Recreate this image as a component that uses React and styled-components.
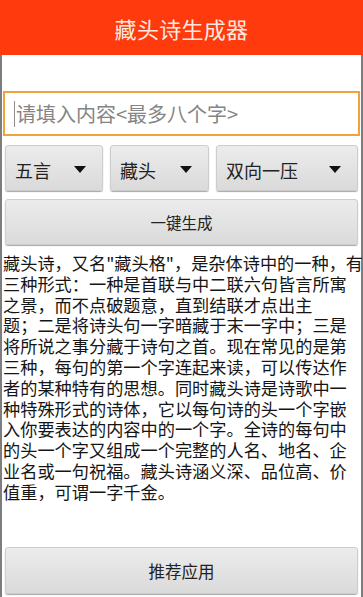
import React from 'react';
import styled, { createGlobalStyle } from 'styled-components';

const GlobalStyle = createGlobalStyle`
  html, body {
    margin: 0;
    padding: 0;
    background: #fff;
  }
  body {
    font-family: "Noto Sans CJK SC", "Noto Sans", sans-serif;
  }
`;

const Screen = styled.div`
  width: 363px;
  height: 597px;
  display: flex;
  flex-direction: column;
  overflow: hidden;
  background: #fff;
`;

const Header = styled.header`
  height: 55px;
  flex: none;
  background: #ff3a0c;
  color: #fde9e2;
  font-size: 22px;
  display: flex;
  align-items: center;
  justify-content: center;
  letter-spacing: 0.3px;
`;

const Body = styled.main`
  flex: 1;
  display: flex;
  flex-direction: column;
  border-left: 2px solid #7d7d7d;
  border-right: 2px solid #7d7d7d;
  min-height: 0;
`;

const Spacer = styled.div`
  height: 36px;
  flex: none;
`;

const InputBox = styled.div`
  height: 41px;
  margin: 0 1px;
  border: 2px solid #f0a23e;
  display: flex;
  align-items: center;
  padding-left: 9px;
  gap: 1px;
`;

const Caret = styled.span`
  width: 1px;
  height: 26px;
  background: #8c8c8c;
`;

const Placeholder = styled.span`
  color: #858585;
  font-size: 20px;
  white-space: nowrap;
`;

const SpinnerRow = styled.div`
  display: grid;
  grid-template-columns: 98px 99px 1fr;
  gap: 7px;
  padding: 0 3px;
  margin-top: 9px;
`;

const GrayButton = styled.div`
  box-sizing: border-box;
  height: ${props => props.$height || 46}px;
  background: linear-gradient(#ececec, #dadada);
  border: 1px solid #cdcdcd;
  border-radius: 3px;
  box-shadow: 0 1px 1px rgba(0, 0, 0, 0.35);
  color: #222;
  display: flex;
  align-items: center;
`;

const Spinner = styled(GrayButton)`
  justify-content: space-between;
  padding: 3px 16px 0 9px;
  font-size: 18px;
`;

const Arrow = styled.span`
  width: 0;
  height: 0;
  border-left: 6px solid transparent;
  border-right: 6px solid transparent;
  border-top: 7px solid #111;
`;

const WideButton = styled(GrayButton)`
  justify-content: center;
  margin: ${props => props.$margin};
  font-size: ${props => props.$size}px;
`;

const Intro = styled.div`
  flex: 1;
  padding: 8px 0 0 1px;
  font-size: 17.2px;
  line-height: 20.8px;
  color: #151515;
`;

const Line = styled.div`
  white-space: nowrap;
`;

const lines = [
  '藏头诗，又名"藏头格"，是杂体诗中的一种，有',
  '三种形式：一种是首联与中二联六句皆言所寓',
  '之景，而不点破题意，直到结联才点出主',
  '题；二是将诗头句一字暗藏于末一字中；三是',
  '将所说之事分藏于诗句之首。现在常见的是第',
  '三种，每句的第一个字连起来读，可以传达作',
  '者的某种特有的思想。同时藏头诗是诗歌中一',
  '种特殊形式的诗体，它以每句诗的头一个字嵌',
  '入你要表达的内容中的一个字。全诗的每句中',
  '的头一个字又组成一个完整的人名、地名、企',
  '业名或一句祝福。藏头诗涵义深、品位高、价',
  '值重，可谓一字千金。',
];

const App = () => {
  return (
    <Screen>
      <GlobalStyle />
      <Header>藏头诗生成器</Header>
      <Body>
        <Spacer />
        <InputBox>
          <Caret />
          <Placeholder>请填入内容&lt;最多八个字&gt;</Placeholder>
        </InputBox>
        <SpinnerRow>
          <Spinner>五言<Arrow /></Spinner>
          <Spinner>藏头<Arrow /></Spinner>
          <Spinner>双向一压<Arrow /></Spinner>
        </SpinnerRow>
        <WideButton $margin="8px 3px 0" $size={15.5}>一键生成</WideButton>
        <Intro>
          {lines.map((text, index) => (
            <Line key={index}>{text}</Line>
          ))}
        </Intro>
        <WideButton $margin="0 3px 3px" $size={16.5} $height={47}>推荐应用</WideButton>
      </Body>
    </Screen>
  );
};

export default App;
